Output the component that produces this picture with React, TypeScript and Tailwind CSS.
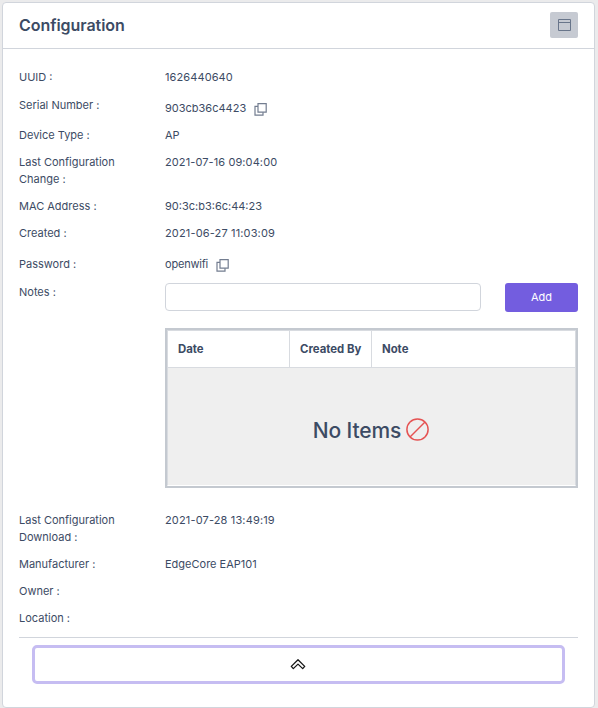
import type { ReactNode } from "react";

function CopyIcon({ className = "" }: { className?: string }) {
  return (
    <svg className={`h-[13px] w-[13px] shrink-0 ${className}`} viewBox="0 0 13 13" fill="none" stroke="#737d90" strokeWidth="1.2">
      <path d="M4 .7h8.2v8.5H4z" />
      <path d="M4 3.4H1v8.8h8V9.2" />
    </svg>
  );
}

function Row({ label, height, children }: { label: ReactNode; height: string; children?: ReactNode }) {
  return (
    <div className={`flex ${height}`}>
      <div className="w-[146px] shrink-0">{label}</div>
      <div className="flex-1">{children}</div>
    </div>
  );
}

export default function App() {
  return (
    <div className="h-[708px] w-[598px] bg-[#ebebec] pt-[2px] pl-[2px] font-['Inter',sans-serif] text-[11px] leading-[17px] text-[#3c4b64]">
      <section className="h-[706px] w-[593px] rounded-[4px] border border-[#d1d5dc] bg-white">
        <header className="flex h-[46px] items-center justify-between border-b border-[#d1d5dc] px-4">
          <h1 className="pb-px text-[16px] leading-5 font-semibold tracking-[-0.05px]">Configuration</h1>
          <button className="mb-px flex h-[26px] w-7 items-center justify-center rounded-[2px] bg-[#c6cad2]">
            <svg className="h-3 w-[13px]" viewBox="0 0 13 12" fill="none" stroke="#68758a">
              <path d="M.5.5h12v11H.5zM.5 3.5h12" />
            </svg>
          </button>
        </header>
        <div className="px-4 pt-5">
          <Row label="UUID :" height="h-[28px]"><span className="tracking-[0.1px]">1626440640</span></Row>
          <Row label="Serial Number :" height="h-[30px]">
            <div className="flex pt-[3px]">
              903cb36c4423
              <CopyIcon className="mt-[3px] ml-2" />
            </div>
          </Row>
          <Row label="Device Type :" height="h-[27px]">AP</Row>
          <Row label={<>Last Configuration<br />Change :</>} height="h-[44px]"><span className="tracking-[0.1px]">2021-07-16 09:04:00</span></Row>
          <Row label="MAC Address :" height="h-[27px]">90:3c:b3:6c:44:23</Row>
          <Row label="Created :" height="h-[31px]"><span className="tracking-[0.15px]">2021-06-27 11:03:09</span></Row>
          <Row label="Password :" height="h-[28px]">
            <div className="flex">
              <span className="tracking-[-0.2px]">openwifi</span>
              <CopyIcon className="mt-[3px] ml-2" />
            </div>
          </Row>
          <Row label="Notes :" height="h-[228px]">
            <div className="-mt-px flex justify-between">
              <input aria-label="Notes" className="h-7 w-[316px] rounded-[4px] border border-[#d1d5dc] bg-white px-2 outline-none" />
              <button className="h-[29px] w-[73px] rounded-[3px] bg-[#735ddf] text-white">Add</button>
            </div>
            <div className="mt-4 flex h-[160px] w-[413px] flex-col border-2 border-[#c4c9d0]">
              <div className="flex flex-1 flex-col border border-[#d8dbe0] border-b-white">
                <div className="flex h-[37px] shrink-0 items-center border-b border-[#d8dbe0] text-[11.375px] font-bold">
                  <div className="flex h-full w-[122px] items-center border-r border-[#d8dbe0] pl-[10px]">Date</div>
                  <div className="flex h-full w-[82px] items-center border-r border-[#d8dbe0] pl-[10px]">Created By</div>
                  <div className="pl-[10px]">Note</div>
                </div>
                <div className="flex flex-1 items-center justify-center bg-[#efefef] pt-[6px] text-[21px] leading-7 font-medium tracking-[-0.1px]">
                  <span className="pt-[2px]">No Items</span>
                  <svg className="mr-px ml-[5px] h-[23px] w-[23px]" viewBox="0 0 23 23" fill="none" stroke="#e55353" strokeWidth="1.5">
                    <circle cx="11.5" cy="11.5" r="10.6" />
                    <path d="M4 19 19 4" />
                  </svg>
                </div>
              </div>
            </div>
          </Row>
          <Row label={<>Last Configuration<br />Download :</>} height="h-[44px]"><span className="tracking-[0.15px]">2021-07-28 13:49:19</span></Row>
          <Row label="Manufacturer :" height="h-[27px]">EdgeCore EAP101</Row>
          <Row label="Owner :" height="h-[27px]" />
          <Row label="Location :" height="h-[27px]" />
          <div className="border-t border-[#d1d5dc] px-[13px] pt-[7px]">
            <button className="flex h-[39px] w-full items-center justify-center rounded-[5px] border-3 border-[#c6bdf2] bg-white">
              <svg className="mr-px h-[11px] w-4" viewBox="0 0 16 11" fill="none" stroke="#171717" strokeWidth="1.3" strokeLinejoin="round">
                <path d="M8 .8 14.7 7.4 12.7 9.6 8 5.1 3.3 9.6 1.3 7.4z" />
              </svg>
            </button>
          </div>
        </div>
      </section>
    </div>
  );
}
